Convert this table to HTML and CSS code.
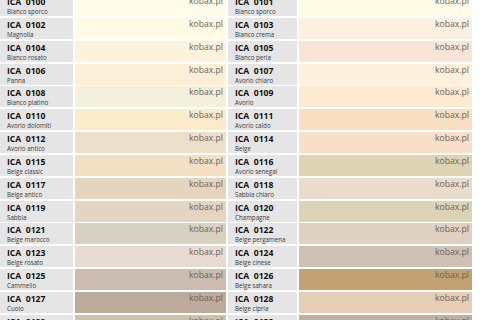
FILE: index.html
```html
<!DOCTYPE html>
<html lang="it">
<head>
<meta charset="utf-8">
<title>ICA colori</title>
<link rel="stylesheet" href="styles.css">
</head>
<body>
<div class="chart">
  <div class="label"><b>ICA&nbsp;&nbsp;0100</b><span>Bianco sporco</span></div>
  <div class="swatch" style="background:#fffde9">kobax.pl</div>
  <div class="label"><b>ICA&nbsp;&nbsp;0101</b><span>Bianco sporco</span></div>
  <div class="swatch" style="background:#fefce7">kobax.pl</div>

  <div class="label"><b>ICA&nbsp;&nbsp;0102</b><span>Magnolia</span></div>
  <div class="swatch" style="background:#fffae4">kobax.pl</div>
  <div class="label"><b>ICA&nbsp;&nbsp;0103</b><span>Bianco crema</span></div>
  <div class="swatch" style="background:#fcf0e0">kobax.pl</div>

  <div class="label"><b>ICA&nbsp;&nbsp;0104</b><span>Bianco rosato</span></div>
  <div class="swatch" style="background:#fdf3dd">kobax.pl</div>
  <div class="label"><b>ICA&nbsp;&nbsp;0105</b><span>Bianco perla</span></div>
  <div class="swatch" style="background:#f9e5d7">kobax.pl</div>

  <div class="label"><b>ICA&nbsp;&nbsp;0106</b><span>Panna</span></div>
  <div class="swatch" style="background:#fdefd6">kobax.pl</div>
  <div class="label"><b>ICA&nbsp;&nbsp;0107</b><span>Avorio chiaro</span></div>
  <div class="swatch" style="background:#fdf1dc">kobax.pl</div>

  <div class="label"><b>ICA&nbsp;&nbsp;0108</b><span>Bianco platino</span></div>
  <div class="swatch" style="background:#f3f0db">kobax.pl</div>
  <div class="label"><b>ICA&nbsp;&nbsp;0109</b><span>Avorio</span></div>
  <div class="swatch" style="background:#fcebd3">kobax.pl</div>

  <div class="label"><b>ICA&nbsp;&nbsp;0110</b><span>Avorio dolomiti</span></div>
  <div class="swatch" style="background:#fcebc9">kobax.pl</div>
  <div class="label"><b>ICA&nbsp;&nbsp;0111</b><span>Avorio caldo</span></div>
  <div class="swatch" style="background:#f9dfc1">kobax.pl</div>

  <div class="label"><b>ICA&nbsp;&nbsp;0112</b><span>Avorio antico</span></div>
  <div class="swatch" style="background:#eedfcb">kobax.pl</div>
  <div class="label"><b>ICA&nbsp;&nbsp;0114</b><span>Beige</span></div>
  <div class="swatch" style="background:#f7dfca">kobax.pl</div>

  <div class="label"><b>ICA&nbsp;&nbsp;0115</b><span>Beige classic</span></div>
  <div class="swatch" style="background:#f3e0c4">kobax.pl</div>
  <div class="label"><b>ICA&nbsp;&nbsp;0116</b><span>Avorio senegal</span></div>
  <div class="swatch" style="background:#ded3b2">kobax.pl</div>

  <div class="label"><b>ICA&nbsp;&nbsp;0117</b><span>Beige antico</span></div>
  <div class="swatch" style="background:#e6d5bd">kobax.pl</div>
  <div class="label"><b>ICA&nbsp;&nbsp;0118</b><span>Sabbia chiaro</span></div>
  <div class="swatch" style="background:#e9dccc">kobax.pl</div>

  <div class="label"><b>ICA&nbsp;&nbsp;0119</b><span>Sabbia</span></div>
  <div class="swatch" style="background:#e3d5c2">kobax.pl</div>
  <div class="label"><b>ICA&nbsp;&nbsp;0120</b><span>Champagne</span></div>
  <div class="swatch" style="background:#dcd3b6">kobax.pl</div>

  <div class="label"><b>ICA&nbsp;&nbsp;0121</b><span>Beige marocco</span></div>
  <div class="swatch" style="background:#d8d0c0">kobax.pl</div>
  <div class="label"><b>ICA&nbsp;&nbsp;0122</b><span>Beige pergamena</span></div>
  <div class="swatch" style="background:#e0d0c0">kobax.pl</div>

  <div class="label"><b>ICA&nbsp;&nbsp;0123</b><span>Beige rosato</span></div>
  <div class="swatch" style="background:#e6dad1">kobax.pl</div>
  <div class="label"><b>ICA&nbsp;&nbsp;0124</b><span>Beige cinese</span></div>
  <div class="swatch" style="background:#cfc0b4">kobax.pl</div>

  <div class="label"><b>ICA&nbsp;&nbsp;0125</b><span>Cammello</span></div>
  <div class="swatch" style="background:#cbbcaf">kobax.pl</div>
  <div class="label"><b>ICA&nbsp;&nbsp;0126</b><span>Beige sahara</span></div>
  <div class="swatch" style="background:#c3a172">kobax.pl</div>

  <div class="label"><b>ICA&nbsp;&nbsp;0127</b><span>Cuoio</span></div>
  <div class="swatch" style="background:#bcab9c">kobax.pl</div>
  <div class="label"><b>ICA&nbsp;&nbsp;0128</b><span>Beige cipria</span></div>
  <div class="swatch" style="background:#e5cdb6">kobax.pl</div>

  <div class="label"><b>ICA&nbsp;&nbsp;0129</b><span>Beige oliva</span></div>
  <div class="swatch" style="background:#c9c4aa">kobax.pl</div>
  <div class="label"><b>ICA&nbsp;&nbsp;0130</b><span>Beige scuro</span></div>
  <div class="swatch" style="background:#bdb0a0">kobax.pl</div>
</div>
</body>
</html>
```

FILE: styles.css
```css
html, body {
  margin: 0;
  padding: 0;
  background: #ffffff;
  overflow: hidden;
}

.chart {
  display: grid;
  grid-template-columns: 73px 151px 69px 173px;
  grid-auto-rows: 21px;
  column-gap: 2px;
  row-gap: 1.85px;
  width: 472px;
  margin-top: -5px;
  font-family: "Open Sans", "Liberation Sans", sans-serif;
}

.label {
  background: #e5e5e5;
  padding: 2px 0 0 7px;
  display: flex;
  flex-direction: column;
  color: #111;
  overflow: hidden;
}

.label b {
  font-size: 8.6px;
  line-height: 11px;
  font-weight: 700;
  white-space: nowrap;
}

.label span {
  font-size: 6.2px;
  line-height: 7px;
  color: #3a3a3a;
  white-space: nowrap;
}

.swatch {
  font-size: 8.6px;
  line-height: 11px;
  color: #6e6256;
  text-align: right;
  padding: 1px 3px 0 0;
  overflow: hidden;
}
```
